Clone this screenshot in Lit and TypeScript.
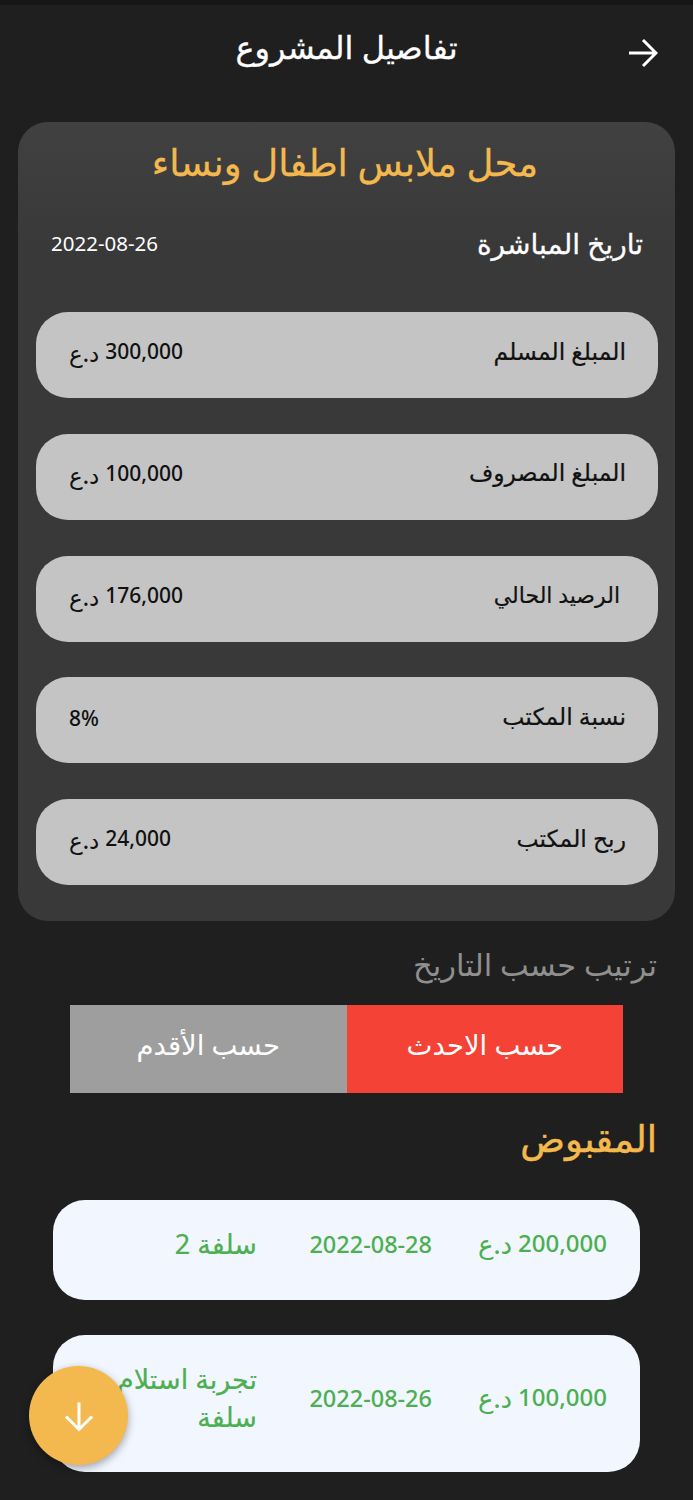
import { LitElement, html, css } from "lit";
import { customElement } from "lit/decorators.js";

const unit = "د.ع";
const rows = [
  { label: "المبلغ المسلم", value: "300,000", unit },
  { label: "المبلغ المصروف", value: "100,000", unit },
  { label: "الرصيد الحالي", value: "176,000", unit, inset: true },
  { label: "نسبة المكتب", value: "8%", unit: "" },
  { label: "ربح المكتب", value: "24,000", unit },
];

@customElement("app-root")
export class AppRoot extends LitElement {
  static styles = css`
    :host { display: block; height: 1500px; overflow: hidden; background: #1f1f1f; position: relative; font-family: "Noto Sans", "DejaVu Sans", sans-serif; direction: rtl; color: #fff; }
    .status { height: 5px; background: #161616; }
    .top { height: 117px; box-sizing: border-box; padding: 33px 35px 0 0; position: relative; }
    .title { position: absolute; left: 0; right: 0; top: 20px; text-align: center; font-size: 32px; line-height: 44px; -webkit-text-stroke: 0.3px #fff; }
    .top svg { display: block; }
    .card { margin: 0 18px; height: 799px; box-sizing: border-box; border-radius: 30px; background: linear-gradient(#414141, #393939 120px); padding: 15px 17px 0 18px; }
    .name { text-align: center; color: #f4b94e; font-size: 37px; line-height: 50px; padding-right: 4px; -webkit-text-stroke: 0.3px #f4b94e; }
    .start { display: flex; justify-content: space-between; align-items: center; padding: 0 15px; margin-top: 31px; height: 50px; }
    .start b { font-weight: 400; font-size: 28px; -webkit-text-stroke: 0.3px #fff; }
    .start span { font-size: 20.5px; }
    .rows { margin-top: 44px; display: flex; flex-direction: column; gap: 35.75px; }
    .row { height: 86px; border-radius: 32px; background: #c4c4c4; color: #111; display: flex; justify-content: space-between; align-items: center; padding: 0 32px 4px 33px; box-sizing: border-box; }
    .label { font-size: 23.5px; margin-bottom: 5px; -webkit-text-stroke: 0.2px #111; }
    .label.inset { margin-right: 6px; font-size: 22px; }
    .value { font-size: 21px; font-weight: 500; display: flex; gap: 6px; }
    .unit { font-size: 23px; }
    .sort { font-size: 30.5px; color: #8f8f8f; padding: 20px 36px 0 0; line-height: 46px; }
    .tabs { display: flex; margin: 18px 70px 0; height: 88px; }
    .tabs div { flex: 1; display: flex; align-items: center; justify-content: center; font-size: 27.5px; padding-bottom: 10px; box-sizing: border-box; }
    .a { background: #f44336; } .b { background: #9e9e9e; }
    .head { color: #f4b94e; font-size: 37px; padding: 20px 36px 0 0; line-height: 50px; -webkit-text-stroke: 0.5px #f4b94e; }
    .item { margin: 0 53px; border-radius: 32px; background: #f1f6ff; color: #4caf50; display: grid; grid-template-columns: 175px 1fr 1fr; align-items: center; padding: 0 33px 12px; box-sizing: border-box; }
    .i1 { height: 100px; margin-top: 37px; } .i2 { height: 137px; margin-top: 35px; }
    .i-val { font-size: 24px; font-weight: 500; display: flex; gap: 6px; }
    .i-val .unit { font-size: 26px; }
    .i-date { font-size: 23.5px; font-weight: 500; }
    .i-name { font-size: 27px; line-height: 38px; margin-right: 2px; -webkit-text-stroke: 0.2px #4caf50; }
    .fab { position: absolute; left: 29px; top: 1366px; width: 99px; height: 99px; border-radius: 50%; background: #f4b94e; display: flex; align-items: center; justify-content: center; box-shadow: 0 3px 8px rgba(0,0,0,.35); }
    .fab svg { display: block; }
  `;
  render() {
    return html`
      <div class="status"></div>
      <div class="top">
        <svg width="30" height="30" viewBox="0 0 30 30" fill="none" stroke="#fff" stroke-width="3"><path d="M1 15h27M15 2l13 13-13 13"/></svg>
        <div class="title">تفاصيل المشروع</div>
      </div>
      <div class="card">
        <div class="name">محل ملابس اطفال ونساء</div>
        <div class="start"><b>تاريخ المباشرة</b><span>2022-08-26</span></div>
        <div class="rows">${rows.map(
          (r) => html`<div class="row">
            <span class="label ${r.inset ? "inset" : ""}">${r.label}</span>
            <span class="value"><span>${r.value}</span>${r.unit ? html`<span class="unit">${r.unit}</span>` : ""}</span>
          </div>`
        )}</div>
      </div>
      <div class="sort">ترتيب حسب التاريخ</div>
      <div class="tabs"><div class="a">حسب الاحدث</div><div class="b">حسب الأقدم</div></div>
      <div class="head">المقبوض</div>
      <div class="item i1"><span class="i-val"><span>200,000</span><span class="unit">${unit}</span></span><span class="i-date">2022-08-28</span><span class="i-name">سلفة 2</span></div>
      <div class="item i2"><span class="i-val"><span>100,000</span><span class="unit">${unit}</span></span><span class="i-date">2022-08-26</span><span class="i-name">تجربة استلام سلفة</span></div>
      <div class="fab"><svg width="32" height="32" viewBox="0 0 32 32" fill="none" stroke="#fff" stroke-width="3"><path d="M16 2.5v27M3 16.5l13 13 13-13"/></svg></div>
    `;
  }
}
